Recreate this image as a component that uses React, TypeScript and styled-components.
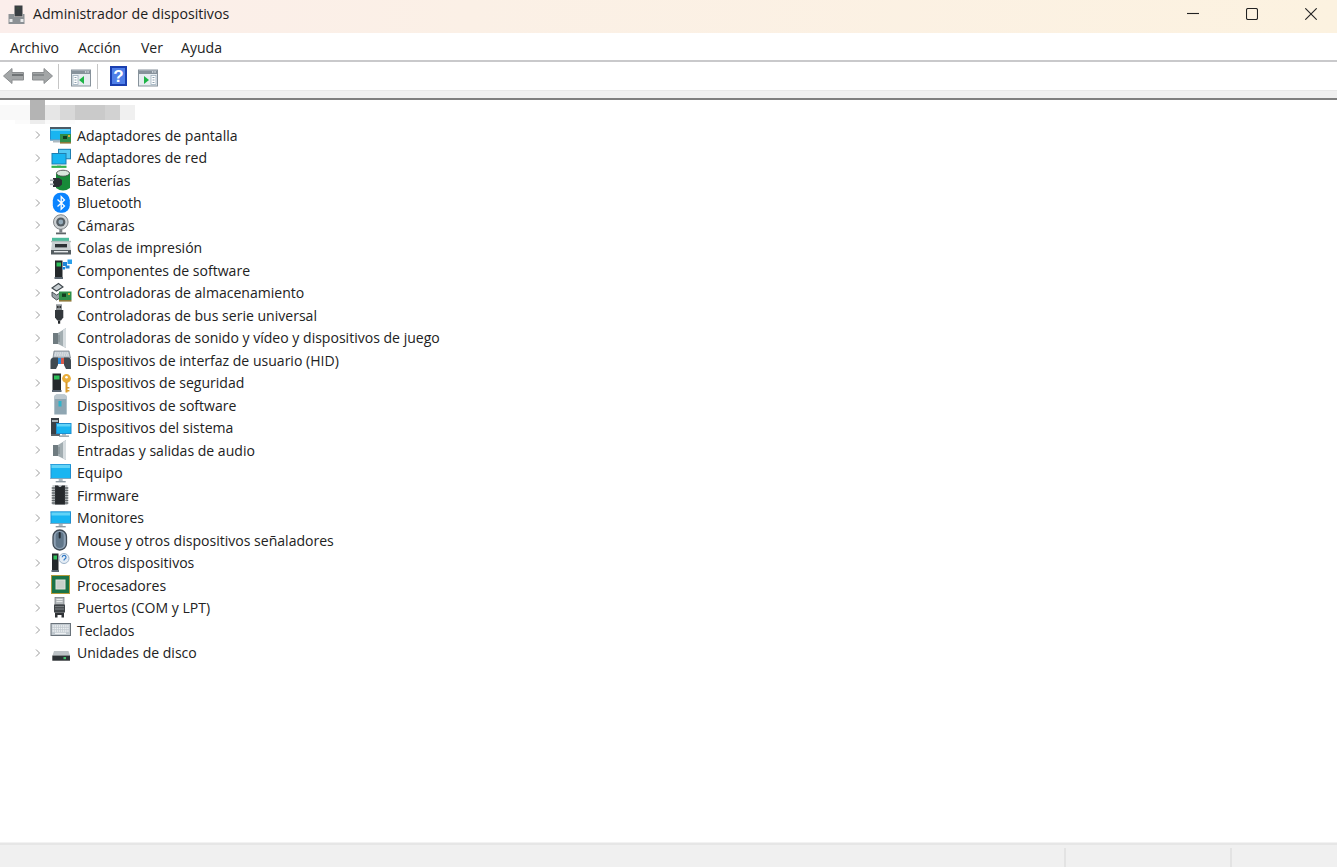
import React from "react";
import styled, { createGlobalStyle } from "styled-components";

const Global = createGlobalStyle`
  html, body { margin: 0; padding: 0; background: #fff; overflow: hidden; }
`;
const Windowed = styled.div`
  width: 1337px; height: 867px; display: flex; flex-direction: column;
  font-family: "Open Sans", "Noto Sans", sans-serif; font-size: 14.05px; color: #222; background: #fff;
`;
const TitleBar = styled.div`
  height: 33px; flex: none; display: flex; align-items: center;
  background: linear-gradient(90deg, #fbeeeb 0%, #fbf0e6 35%, #fcf2e0 100%);
`;
const TitleIcon = styled.svg`width: 17px; height: 20px; margin: -4px 8px 0 8px; flex: none;`;
const TitleText = styled.span`flex: 1; margin-top: -6px; font-size: 14.15px; color: #1c1c1c;`;
const Controls = styled.div`display: flex; margin-top: -5px; padding-right: 20px; gap: 47px;`;
const ControlIcon = styled.svg`width: 12px; height: 12px; display: block; fill: none; stroke: #222; stroke-width: 1.1;`;
const MenuBar = styled.div`
  height: 29px; flex: none; display: flex; align-items: center; padding-left: 10px; box-sizing: border-box;
  border-bottom: 2px solid #c9c9cb; background: #fff; padding-top: 1px;
`;
const MenuItem = styled.span<{ $w: number }>`color: #222; width: ${p => p.$w}px; flex: none;`;
const ToolBar = styled.div`
  height: 28px; flex: none; display: flex; align-items: center; background: #fff; padding-left: 3px;
`;
const ToolIcon = styled.svg<{ $w: number; $ml: number }>`
  width: ${p => p.$w}px; height: 22px; margin-left: ${p => p.$ml}px; flex: none;
`;
const ToolSep = styled.div<{ $ml: number }>`
  width: 1px; height: 25px; background: #c6c6c6; margin-left: ${p => p.$ml}px; flex: none;
`;
const ToolFoot = styled.div`
  height: 7px; flex: none; background: #f0f0f0; border-top: 1px solid #e8e8e8; border-bottom: 2px solid #7f7f7f;
`;
const Tree = styled.div`flex: 1; display: flex; flex-direction: column; background: #fff;`;
const Mosaic = styled.div`height: 23.75px; flex: none; display: flex; flex-direction: column;`;
const MosaicRow = styled.div<{ $h: number }>`display: flex; height: ${p => p.$h}px;`;
const Pixel = styled.div<{ $c: string }>`width: 15px; background: ${p => p.$c};`;
const Row = styled.div`height: 22.5px; flex: none; display: flex; align-items: center;`;
const Chevron = styled.svg`width: 6px; height: 8px; margin-left: 35px; flex: none; fill: none; stroke: #9a9a9a; stroke-width: 1;`;
const Icon = styled.svg`width: 22px; height: 22px; margin-left: 9px; flex: none;`;
const Label = styled.span`margin-left: 5px; white-space: nowrap; color: #222;`;
const StatusBar = styled.div`
  height: 19px; flex: none; display: flex; background: #f0f0f0; border-top: 2px solid #e6e6e6; box-shadow: 0 -1px 0 #f2f2f2;
  padding-top: 3px;
`;
const StatusCell = styled.div<{ $w?: number }>`
  ${p => p.$w ? `width: ${p.$w}px;` : "flex: 1;"} border-right: 2px solid #e3e3e3; flex-shrink: 0;
  &:last-child { border-right: 0; }
`;

const Screen = ({ x = 2, y = 3, w = 18, h = 12, top = "#2a9fdc" }: { x?: number; y?: number; w?: number; h?: number; top?: string }) => (
  <>
    <rect x={x} y={y} width={w} height={h} fill="#1f8fd0" />
    <rect x={x} y={y} width={w} height={1} fill={top} />
    <rect x={x + 1} y={y + 1} width={w - 2} height={h - 2} fill="#19b5f1" />
    <rect x={x + 1} y={y + 1} width={w - 2} height={3} fill="#62d3f7" />
    <rect x={x} y={y + h - 1} width={w} height={1} fill="#7fa6bd" />
  </>
);
const Stand = ({ cx = 11, y = 15 }: { cx?: number; y?: number }) => (
  <>
    <rect x={cx - 2} y={y} width={4} height={2} fill="#aeb9c0" />
    <rect x={cx - 5} y={y + 2} width={10} height={1.4} fill="#8d99a1" />
  </>
);
const Tower = ({ x = 5, w = 7 }: { x?: number; w?: number }) => (
  <>
    <rect x={x} y={1.5} width={w} height={17} fill="#24282b" />
    <rect x={x + 1.5} y={3.5} width={w - 3} height={4} fill="#2fc05a" />
    <rect x={x - 0.5} y={18} width={w + 1} height={2} fill="#5a6570" />
  </>
);
const Speaker = () => (
  <>
    <rect x={3} y={6} width={5} height={11} fill="#6f7b80" />
    <path d="M8 6 L16 1 V21 L8 17 Z" fill="#a2adb1" />
    <path d="M13 3 L16 1 V21 L13 19.5 Z" fill="#d6dcdf" />
    <path d="M9 8 V15" stroke="#7f8a8f" strokeWidth="1" />
  </>
);

const icons: Record<string, React.ReactNode> = {
  pantalla: <>
    <Screen x={0} y={3} w={21} h={13.5} top="#4b5a66" /><rect x={0} y={3} width={21} height={2} fill="#4b5a66" />
    <rect x={3} y={16.5} width={7} height={2} fill="#aeb9c0" />
    <rect x={10} y={10} width={11} height={8} fill="#2f8f4a" /><rect x={13} y={12} width={4} height={3} fill="#143d20" /><rect x={18} y={11} width={2} height={2} fill="#d7b23c" /><rect x={10} y={18} width={11} height={1.6} fill="#8d7a3a" />
  </>,
  red: <>
    <rect x={8} y={1.8} width={13} height={10.5} fill="#1f7fb0" /><rect x={9} y={2.8} width={11} height={8.5} fill="#52c8f3" />
    <rect x={1.5} y={6} width={15} height={11.5} fill="#1f7fb0" /><rect x={2.5} y={7} width={13} height={9.5} fill="#19b5f1" />
    <rect x={7} y={17.5} width={4} height={1.2} fill="#aeb9c0" /><rect x={1.5} y={18.7} width={15} height={2.2} fill="#33b24d" />
  </>,
  baterias: <>
    <path d="M6 4 Q13 -1 20 4 V19 Q13 24 6 19 Z" fill="#188a38" />
    <ellipse cx="13" cy="4.2" rx="6.5" ry="3" fill="#d9e7dc" stroke="#444" strokeWidth="0.8" />
    <path d="M3 9 h6 l3 2 v4.5 l-3 2.5 h-6 Z" fill="#2a2e33" />
    <rect x={0} y={10.5} width={4} height={1.6} fill="#a7adb2" /><rect x={0} y={14.5} width={4} height={1.6} fill="#a7adb2" />
  </>,
  bluetooth: <>
    <rect x={2.8} y={0.8} width={17} height={20} rx={7.5} fill="#0a84ff" />
    <path d="M7.5 7.5 L14.5 14 L11.2 17.2 V4.6 L14.5 8 L7.5 14.5" fill="none" stroke="#fff" strokeWidth="1.3" />
  </>,
  camaras: <>
    <circle cx="10.8" cy="8" r="7.3" fill="#cdd1d3" stroke="#767b7e" strokeWidth="0.9" />
    <circle cx="10.8" cy="8" r="4.6" fill="#545d63" /><circle cx="10.8" cy="8" r="2.4" fill="#93a9b8" />
    <rect x={9.3} y={15} width={3} height={3.5} fill="#7d8286" /><rect x={6} y={18.5} width={10} height={1.8} fill="#5f6569" />
  </>,
  impresion: <>
    <rect x={2} y={0.8} width={17} height={3.5} fill="#4dbb9c" /><rect x={1} y={3.8} width={20} height={1.5} fill="#aebdbb" />
    <path d="M2 5 H20 L21 14 H1 Z" fill="#c8cfd1" /><rect x={5} y={7} width={12} height={3.4} fill="#2c3135" />
    <rect x={1} y={13} width={20} height={4.5} fill="#555d61" /><rect x={4} y={14} width={14} height={1.4} fill="#e5e9ea" />
  </>,
  software: <>
    <Tower x={5} w={7.5} />
    <rect x={13} y={3} width={4} height={4} fill="#1f86d9" /><rect x={17.5} y={0.5} width={4.5} height={4.5} fill="#2aa0ea" /><rect x={15.5} y={6.5} width={4} height={3} fill="#1f86d9" /><rect x={12.5} y={8} width={2.5} height={2.5} fill="#1f86d9" />
  </>,
  almacen: <>
    <path d="M2 6 L8.5 1.5 L13 5 L6.5 9 Z" fill="#c9d0d4" stroke="#3f474c" strokeWidth="1.1" />
    <path d="M2 10 L6.5 13 L10 11 V16 L6.5 18 L2 14.5 Z" fill="#9aa3a8" stroke="#3f474c" strokeWidth="0.9" />
    <rect x={9} y={9.5} width={12.5} height={8.5} fill="#2f8f4a" /><rect x={12} y={11.5} width={4} height={3.4} fill="#143d20" /><rect x={18} y={11} width={2} height={2} fill="#d7b23c" /><rect x={9} y={18} width={12.5} height={1.6} fill="#8d7a3a" />
  </>,
  usb: <>
    <rect x={6} y={0.3} width={6} height={6} fill="#8d9397" /><rect x={7.2} y={2} width={1.3} height={2} fill="#222" /><rect x={9.6} y={2} width={1.3} height={2} fill="#222" />
    <path d="M5 6 H13.3 V13.5 L11 16.5 H7.3 L5 13.5 Z" fill="#33383c" />
    <rect x={8} y={16.5} width={2.2} height={3.2} fill="#23272a" />
  </>,
  sonido: <Speaker />,
  hid: <>
    <path d="M4 2 H19 L20.5 9 H3 Z" fill="#bcc5cc" stroke="#5e6974" strokeWidth="0.6" />
    <path d="M5 4h13.5M4.5 6h14.5" stroke="#eef1f3" strokeWidth="1" strokeDasharray="1.5 0.8" />
    <path d="M0.5 20 V12 Q0.5 8.5 4 8.5 H8 V16 L6 20 Z" fill="#3f4951" />
    <path d="M21 20 V12 Q21 8.5 18 8.5 H14 V16 L16 20 Z" fill="#3f4951" />
    <rect x={8} y={9} width={3} height={6} fill="#2a8ad8" /><rect x={11} y={9} width={3} height={6} fill="#d85a4a" />
  </>,
  seguridad: <>
    <Tower x={2.5} w={8.5} />
    <circle cx="16.5" cy="6.5" r="4.4" fill="#e9ad3b" /><circle cx="16.5" cy="5.2" r="1.3" fill="#fff" />
    <rect x={15.5} y={10} width={2} height={10.5} fill="#d99a2b" /><rect x={17} y={15} width={2.4} height={1.5} fill="#d99a2b" /><rect x={17} y={18} width={2.4} height={1.5} fill="#d99a2b" />
  </>,
  dsoftware: <>
    <path d="M4.3 3 Q4.3 0.5 6.5 0.5 H14.5 Q16.7 0.5 16.7 3 V20.5 H4.3 Z" fill="#8fa6b2" />
    <path d="M4.3 3 Q4.3 0.5 6.5 0.5 H14.5 Q16.7 0.5 16.7 3 V5 H4.3 Z" fill="#bcc8cf" />
    <rect x={8.5} y={7} width={3} height={5.5} fill="#2eb4cc" />
  </>,
  sistema: <>
    <rect x={1} y={1} width={8} height={17} fill="#3a4046" /><rect x={2} y={3} width={6} height={2} fill="#aab3b9" /><rect x={1} y={17} width={9} height={2} fill="#5b646b" />
    <rect x={6} y={6} width={15.5} height={11} fill="#1f8fd0" /><rect x={7} y={7} width={13.5} height={9} fill="#19b5f1" /><rect x={7} y={7} width={13.5} height={2.5} fill="#62d3f7" />
    <rect x={12} y={17} width={4} height={1.5} fill="#aeb9c0" /><rect x={9} y={18.5} width={10} height={1.3} fill="#8d99a1" />
  </>,
  audio: <Speaker />,
  equipo: <><Screen x={0.5} y={2} w={20.5} h={15} /><Stand cx={10.7} y={17} /></>,
  firmware: <>
    <rect x={2.5} y={1} width={15} height={20} fill="#c6cacc" />
    <path d="M5 1.5 H8 Q10 4.5 12 1.5 H15 V20.5 H5 Z" fill="#26292c" />
    <path d="M1.7 4h3.5M1.7 6.5h3.5M1.7 9h3.5M1.7 11.5h3.5M1.7 14h3.5M1.7 16.5h3.5M1.7 19h3.5M14.8 4h3.5M14.8 6.5h3.5M14.8 9h3.5M14.8 11.5h3.5M14.8 14h3.5M14.8 16.5h3.5M14.8 19h3.5" stroke="#62676a" strokeWidth="1.3" />
  </>,
  monitores: <><Screen x={0.5} y={4.5} w={20.5} h={12.5} /><Stand cx={10.7} y={17} /></>,
  mouse: <>
    <rect x={3} y={1} width={13.5} height={20} rx={6.7} fill="#8da0b3" stroke="#3f4a55" strokeWidth="1.3" />
    <rect x={5.7} y={3} width={8} height={16} rx={4} fill="#607689" />
    <rect x={8.7} y={3} width={2} height={6.5} rx={1} fill="#232c34" />
  </>,
  otros: <>
    <Tower x={2} w={6.5} />
    <circle cx="14" cy="6.5" r="5" fill="#e4edf6" stroke="#9db3ca" strokeWidth="1" />
    <path d="M12.2 5.2 a1.9 1.9 0 1 1 2.5 1.9 Q14 7.5 14 8.6" fill="none" stroke="#2f78c4" strokeWidth="1.2" />
  </>,
  procesadores: <>
    <rect x={1.5} y={1.5} width={18} height={18} fill="#1a7347" stroke="#b29a3a" strokeWidth="1" />
    <rect x={5.5} y={5.5} width={10} height={10} fill="#dfe2dd" />
    <rect x={6.5} y={6.5} width={8} height={8} fill="#c9d1cb" />
  </>,
  puertos: <>
    <rect x={5} y={0.5} width={9} height={7} fill="#b4b9bc" stroke="#6c7175" strokeWidth="0.7" />
    <path d="M6.5 2.5h6M6.5 4.5h6" stroke="#eceeef" strokeWidth="0.9" />
    <rect x={4} y={7.5} width={11} height={8} fill="#3e4347" />
    <path d="M5 9.7h9M5 12h9" stroke="#84898d" strokeWidth="1" />
    <path d="M5 15.5 H14 V20.5 H11.5 V18 H7.5 V20.5 H5 Z" fill="#2f3336" />
  </>,
  teclados: <>
    <rect x={1} y={4.5} width={19.5} height={12} fill="#c1c9cf" stroke="#69727a" strokeWidth="1" />
    <path d="M2.5 7h16.5M2.5 9.5h16.5M2.5 12h16.5" stroke="#eef1f3" strokeWidth="1.4" strokeDasharray="1.4 0.7" />
    <rect x={5} y={13.7} width={11} height={1.3} fill="#eef1f3" />
  </>,
  disco: <>
    <path d="M4 9 H18.5 L20 13.5 H2.5 Z" fill="#bcc2c5" />
    <rect x={2.3} y={13.5} width={17.7} height={5.2} fill="#2b3033" />
    <rect x={13.5} y={15} width={2.5} height={2.2} fill="#3fc06a" />
  </>,
};

const rows: [string, string][] = [
  ["pantalla", "Adaptadores de pantalla"], ["red", "Adaptadores de red"], ["baterias", "Baterías"],
  ["bluetooth", "Bluetooth"], ["camaras", "Cámaras"], ["impresion", "Colas de impresión"],
  ["software", "Componentes de software"], ["almacen", "Controladoras de almacenamiento"],
  ["usb", "Controladoras de bus serie universal"], ["sonido", "Controladoras de sonido y vídeo y dispositivos de juego"],
  ["hid", "Dispositivos de interfaz de usuario (HID)"], ["seguridad", "Dispositivos de seguridad"],
  ["dsoftware", "Dispositivos de software"], ["sistema", "Dispositivos del sistema"], ["audio", "Entradas y salidas de audio"],
  ["equipo", "Equipo"], ["firmware", "Firmware"], ["monitores", "Monitores"],
  ["mouse", "Mouse y otros dispositivos señaladores"], ["otros", "Otros dispositivos"], ["procesadores", "Procesadores"],
  ["puertos", "Puertos (COM y LPT)"], ["teclados", "Teclados"], ["disco", "Unidades de disco"],
];

const mosaicTop = ["#fff", "#fff", "#b4b4b4", "#fff", "#fff", "#fff", "#fff", "#fff", "#fff"];
const mosaicMid = ["#f9f9f9", "#f9f9f9", "#b4b4b4", "#e6e6e6", "#d8d8d8", "#cacaca", "#cacaca", "#d2d2d2", "#f0f0f0"];
const mosaicLow = ["#fff", "#fbfbfb", "#ededed", "#fafafa", "#fcfcfc", "#fff", "#fff", "#fff", "#fff"];

const ToolWindow = ({ flip }: { flip?: boolean }) => (
  <>
    <rect x={0.5} y={1.5} width={19} height={16} fill="#e6ecf0" stroke="#87929b" />
    <rect x={1} y={2} width={18} height={3.5} fill="#87929b" />
    <rect x={14} y={2.8} width={1.3} height={1.3} fill="#e6ecf0" /><rect x={16.4} y={2.8} width={1.3} height={1.3} fill="#e6ecf0" />
    <rect x={flip ? 13 : 2} y={7} width={5} height={9} fill="#fff" stroke="#9fb0bd" strokeWidth="0.8" />
    <path d="M3.5 9h2M3.5 11.5h2M3.5 14h2" stroke="#7f95a6" strokeWidth="0.9" transform={flip ? "translate(11 0)" : undefined} />
    <path d={flip ? "M6 7.5 L11 11.5 L6 15.5 Z" : "M13 7.5 L8 11.5 L13 15.5 Z"} fill="#1db445" />
  </>
);

export default function App() {
  return (
    <Windowed>
      <Global />
      <TitleBar>
        <TitleIcon viewBox="0 0 17 20">
          <rect x={6.5} y={0.5} width={8} height={11} fill="#3a3f43" />
          <rect x={8.5} y={2} width={3} height={2.4} fill="#3b4a40" />
          <path d="M0.5 9 H6.5 V12 H14.5 V9 H16.5 V19 H0.5 Z" fill="#8c9195" />
          <rect x={1.5} y={14} width={3} height={3} fill="#e7e9ea" /><rect x={12.5} y={14} width={3} height={3} fill="#e7e9ea" />
        </TitleIcon>
        <TitleText>Administrador de dispositivos</TitleText>
        <Controls>
          <ControlIcon viewBox="0 0 12 12"><path d="M0 5.5 H12" /></ControlIcon>
          <ControlIcon viewBox="0 0 12 12"><rect x={0.5} y={0.5} width={11} height={11} rx={1.5} /></ControlIcon>
          <ControlIcon viewBox="0 0 12 12"><path d="M0.3 0.3 L11.7 11.7 M11.7 0.3 L0.3 11.7" /></ControlIcon>
        </Controls>
      </TitleBar>
      <MenuBar>
        <MenuItem $w={68}>Archivo</MenuItem>
        <MenuItem $w={63}>Acción</MenuItem>
        <MenuItem $w={40}>Ver</MenuItem>
        <MenuItem $w={50}>Ayuda</MenuItem>
      </MenuBar>
      <ToolBar>
        <ToolIcon $w={21} $ml={0} viewBox="0 0 21 22">
          <g transform="translate(0 1.5)">
            <path d="M0.5 9.5 L9 2 V6 H20.5 V13.5 H9 V17 Z" fill="#a3a6a7" stroke="#8b8e90" />
            <path d="M9 7.5 H20 V9.5 H9 Z" fill="#6f7375" />
          </g>
        </ToolIcon>
        <ToolIcon $w={21} $ml={8} viewBox="0 0 21 22">
          <g transform="translate(0 1.5)">
            <path d="M20.5 9.5 L12 2 V6 H0.5 V13.5 H12 V17 Z" fill="#a3a6a7" stroke="#8b8e90" />
            <path d="M1 7.5 H12 V9.5 H1 Z" fill="#85898b" />
          </g>
        </ToolIcon>
        <ToolSep $ml={5} />
        <ToolIcon $w={20} $ml={12} viewBox="0 0 20 22"><g transform="translate(0 3.5)"><ToolWindow /></g></ToolIcon>
        <ToolSep $ml={6} />
        <ToolIcon $w={17} $ml={12} viewBox="0 0 17 22">
          <rect x={0} y={1} width={17} height={20} fill="#1a3fb0" />
          <rect x={2} y={3} width={13} height={16} fill="#4f7fe8" />
          <text x="8.5" y="17" textAnchor="middle" fontSize="17" fontWeight="700" fontFamily="Liberation Sans, sans-serif" fill="#fff">?</text>
        </ToolIcon>
        <ToolIcon $w={20} $ml={11} viewBox="0 0 20 22"><g transform="translate(0 3.5)"><ToolWindow flip /></g></ToolIcon>
      </ToolBar>
      <ToolFoot />
      <Tree>
        <Mosaic>
          <MosaicRow $h={5}>{mosaicTop.map((c, i) => <Pixel key={i} $c={c} />)}</MosaicRow>
          <MosaicRow $h={15}>{mosaicMid.map((c, i) => <Pixel key={i} $c={c} />)}</MosaicRow>
          <MosaicRow $h={3.75}>{mosaicLow.map((c, i) => <Pixel key={i} $c={c} />)}</MosaicRow>
        </Mosaic>
        {rows.map(([k, t]) => (
          <Row key={t}>
            <Chevron viewBox="0 0 6 8"><path d="M1 0.5 L4.5 4 L1 7.5" /></Chevron>
            <Icon viewBox="0 0 22 22">{icons[k]}</Icon>
            <Label>{t}</Label>
          </Row>
        ))}
      </Tree>
      <StatusBar>
        <StatusCell $w={1064} />
        <StatusCell $w={164} />
        <StatusCell />
      </StatusBar>
    </Windowed>
  );
}
